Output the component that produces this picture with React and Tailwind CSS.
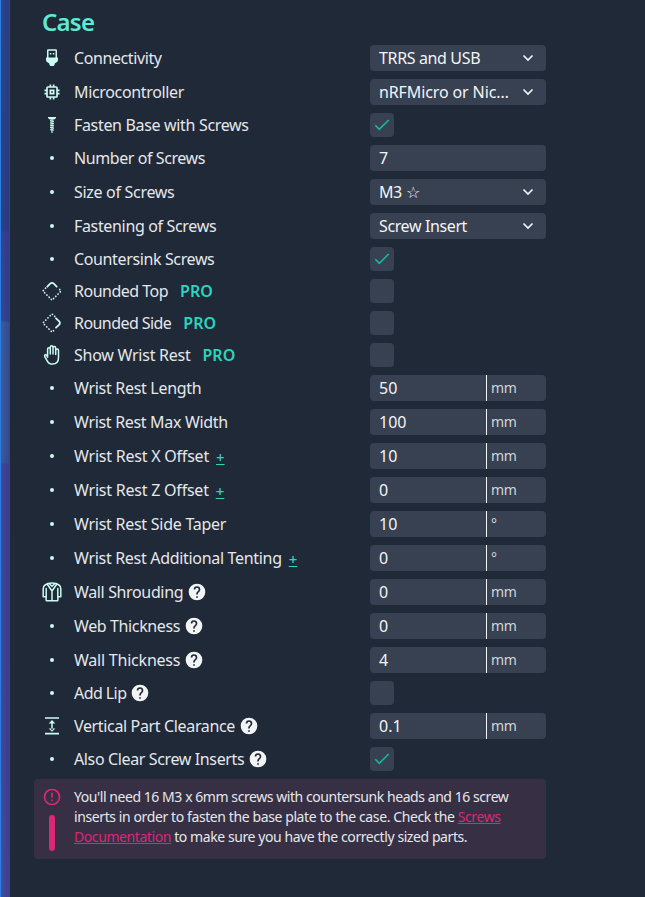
import React from "react";
import { MdMemory } from "react-icons/md";

function UsbIcon() {
  return (
    <svg width="20" height="20" viewBox="0 0 20 20" fill="currentColor">
      <path
        fillRule="evenodd"
        d="M6.200 1.300h7.600q1.200 0 1.200 1.200v7h1v2.600q0 1.500-1.300 2.200l-1.700.9-.6 1.900q-.3.9-1.200.9H8.800q-.9 0-1.200-.9L7 15.200l-1.700-.9Q4 13.600 4 12.100V9.500h1v-7q0-1.200 1.200-1.200zM6.500 2.800v6.700h7V2.800zM7.800 5h1.500v1.500H7.800zM10.800 5h1.500v1.500h-1.500z"
      />
    </svg>
  );
}

function ScrewIcon() {
  return (
    <svg width="20" height="20" viewBox="0 0 20 20" fill="currentColor">
      <path d="M6 2h8v1.100l-1.700 1.300H7.700L6 3.100zM8 5l4 .8v1.200L8 6.200zM8 7.200l4 .8v1.200L8 8.400zM8 9.500l4 .8v1.200l-4-.8zM8 11.800l4 .8v1.200l-4-.8zM8.300 14l3.400.6v1.200l-3.400-.6zM9 16.200l2 .4-.6 1.400H9.600z" />
      <path d="M8.700 4h2.600v12H8.700z" opacity=".5" />
    </svg>
  );
}

function DiamondIcon({ side }) {
  return (
    <svg width="20" height="20" viewBox="0 0 20 20" fill="none" stroke="currentColor" strokeWidth="1.500" strokeLinecap="round">
      {side ? (
        <>
          <path d="M12.800 3.500 10 .9.900 10 10 19.100l2.800-2.600" strokeWidth="1.700" strokeDasharray="0.100 3.050" />
          <path d="M14 5.300 17 8.200q1.800 1.800 0 3.600L14 14.700" strokeWidth="1.800" />
        </>
      ) : (
        <>
          <path d="M3.500 7.200.9 10 10 19.100 19.100 10l-2.600-2.800" strokeWidth="1.700" strokeDasharray="0.100 3.050" />
          <path d="M5.300 5.700 8.200 2.700q1.800-1.800 3.600 0L14.700 5.700" strokeWidth="1.800" />
        </>
      )}
    </svg>
  );
}

function HandIcon() {
  return (
    <svg width="20" height="20" viewBox="0 0 20 20" fill="none" stroke="currentColor" strokeWidth="1.500" strokeLinecap="round" strokeLinejoin="round">
      <path d="M5.600 12.200V4.100a1.350 1.350 0 0 1 2.700 0V9V2.200a1.350 1.350 0 0 1 2.700 0V9V2.900a1.350 1.350 0 0 1 2.700 0V9.500V5.400a1.400 1.400 0 0 1 2.800 0v7.200q0 6.500-6 6.500-3.700 0-5.300-3.300L2.700 11.500q-.5-1.500.6-1.900 1.100-.3 2.300 2.600" />
    </svg>
  );
}

function JacketIcon() {
  return (
    <svg width="20" height="20" viewBox="0 0 20 20" fill="none" stroke="currentColor" strokeWidth="1.500" strokeLinejoin="round" strokeLinecap="round">
      <path d="M6 1.500 3.100 3Q1.200 4.200 1.200 7v7.800h2.900V18q0 .8.800.8h10.200q.8 0 .8-.8v-3.200h2.900V7q0-2.800-1.900-4L14 1.500q-4-1-8 0z" />
      <path d="M4.200 14.800V6.500M15.800 14.800V6.500M5.300 2.200 10 9l4.700-6.800M10 9v9.600M7.300 1.700 10 4.200l2.700-2.500" />
    </svg>
  );
}

function ClearanceIcon() {
  return (
    <svg width="20" height="20" viewBox="0 0 20 20" fill="currentColor">
      <path d="M3 1.200h14v1.600H3zM3 16.800h14v1.600H3zM9.250 6h1.500v8h-1.500zM10 4l3.300 3.400H6.700zM10 15.800l3.300-3.400H6.700z" />
    </svg>
  );
}

function Help() {
  return (
    <svg width="20" height="20" viewBox="0 0 24 24" className="ml-1 text-[#f3f4f6]" fill="currentColor">
      <path d="M15.070 11.250l-.9.920C13.450 12.890 13 13.500 13 15h-2v-.5c0-1.110.450-2.110 1.170-2.830l1.240-1.260c.370-.360.590-.860.590-1.410a2 2 0 0 0-4 0H8a4 4 0 0 1 8 0 3.200 3.200 0 0 1-.930 2.250M13 19h-2v-2h2M12 2a10 10 0 1 0 0 20 10 10 0 0 0 0-20z" />
    </svg>
  );
}

const icons = {
  usb: <UsbIcon />,
  chip: <MdMemory size={20} />,
  screw: <ScrewIcon />,
  top: <DiamondIcon />,
  side: <DiamondIcon side />,
  hand: <HandIcon />,
  jacket: <JacketIcon />,
  clearance: <ClearanceIcon />,
};

function Control({ row }) {
  if (row.check !== undefined) {
    return (
      <div className="flex h-6 w-6 items-center justify-center rounded bg-[#374151]">
        {row.check && (
          <svg width="16" height="12" viewBox="0 0 16 12" fill="none" stroke="#14b8a6" strokeWidth="1.600">
            <path d="M1.300 6.300 5.300 10.300 14.700 1" />
          </svg>
        )}
      </div>
    );
  }
  if (row.select) {
    return (
      <div className="flex h-[26px] w-44 items-center justify-between rounded bg-[#374151] pl-[9px] pr-3 text-[#f3f4f6]">
        <span className={row.selectTrack}>{row.select}</span>
        <svg width="12" height="8" viewBox="0 0 12 8" fill="none" stroke="currentColor" strokeWidth="1.700">
          <path d="M1.500 1.500 6 6l4.500-4.500" />
        </svg>
      </div>
    );
  }
  return (
    <div className="flex h-[26px] w-44 items-center rounded bg-[#374151] text-[#f3f4f6]">
      <span className="flex-1 pl-[9px]">{row.value}</span>
      {row.unit && (
        <span className="flex h-full w-[60px] items-center border-l border-[#f3f4f6] pl-1 text-sm tracking-[-0.4px] text-[#d1d5db]">{row.unit}</span>
      )}
    </div>
  );
}

const rows = [
  { icon: "usb", label: "Connectivity", track: "tracking-[-0.4px]", select: "TRRS and USB", selectTrack: "tracking-[-0.36px]" },
  { icon: "chip", label: "Microcontroller", track: "tracking-[-0.34px]", select: "nRFMicro or Nic…", selectTrack: "tracking-[-0.12px]" },
  { icon: "screw", label: "Fasten Base with Screws", track: "tracking-[-0.33px]", check: true },
  { label: "Number of Screws", track: "tracking-[-0.42px]", value: "7" },
  { label: "Size of Screws", track: "tracking-[-0.3px]", select: "M3 ☆", selectTrack: "tracking-[-0.4px]" },
  { label: "Fastening of Screws", track: "tracking-[-0.34px]", select: "Screw Insert", selectTrack: "tracking-[-0.38px]" },
  { label: "Countersink Screws", track: "tracking-[-0.37px]", check: true },
  { icon: "top", label: "Rounded Top", track: "tracking-[-0.5px]", pro: true, check: false },
  { icon: "side", label: "Rounded Side", track: "tracking-[-0.56px]", pro: true, check: false },
  { icon: "hand", label: "Show Wrist Rest", track: "tracking-[-0.25px]", pro: true, check: false },
  { label: "Wrist Rest Length", track: "tracking-[-0.3px]", value: "50", unit: "mm" },
  { label: "Wrist Rest Max Width", track: "tracking-[-0.32px]", value: "100", unit: "mm" },
  { label: "Wrist Rest X Offset", track: "tracking-[-0.22px]", pm: true, value: "10", unit: "mm" },
  { label: "Wrist Rest Z Offset", track: "tracking-[-0.22px]", pm: true, value: "0", unit: "mm" },
  { label: "Wrist Rest Side Taper", track: "tracking-[-0.26px]", value: "10", unit: "°" },
  { label: "Wrist Rest Additional Tenting", track: "tracking-[-0.31px]", pm: true, value: "0", unit: "°" },
  { icon: "jacket", label: "Wall Shrouding", track: "tracking-[-0.36px]", help: true, value: "0", unit: "mm" },
  { label: "Web Thickness", track: "tracking-[-0.38px]", help: true, value: "0", unit: "mm" },
  { label: "Wall Thickness", track: "tracking-[-0.22px]", help: true, value: "4", unit: "mm" },
  { label: "Add Lip", track: "tracking-[-0.57px]", help: true, check: false },
  { icon: "clearance", label: "Vertical Part Clearance", track: "tracking-[-0.35px]", help: true, value: "0.1", unit: "mm" },
  { label: "Also Clear Screw Inserts", track: "tracking-[-0.37px]", help: true, check: true },
];

export default function App() {
  return (
    <div className="flex h-[897px] w-[645px] overflow-hidden bg-[#1f2937] font-['Noto_Sans',sans-serif] text-base text-[#e5e7eb]">
      <div className="w-px bg-[#2b7fe0]" />
      <div className="w-2 bg-[linear-gradient(to_right,transparent,rgba(31,41,90,0.3)),linear-gradient(187deg,#2c4590_0px,#2b3f8c_229px,#37429a_232px,#33459a_318px,#3c5ba2_321px,#3e58a2_459px,#43459c_462px,#42479e_750px,#474aa6_897px)]" />
      <div className="w-px bg-[#414b52]" />
      <div className="pl-6 pt-1.5">
        <h2 className="mb-[7px] ml-2 text-2xl font-semibold leading-8 tracking-[-0.75px] text-[#5eead4]">Case</h2>
        <div className="flex flex-col gap-2">
          {rows.map((row) => (
            <div key={row.label} className="flex items-center">
              <div className="ml-2 flex w-5 justify-center text-[#ccfbf1]">
                {row.icon ? icons[row.icon] : <span className="h-[4.5px] w-[4.5px] rounded-full bg-[#ccfbf1]" />}
              </div>
              <div className="ml-3 flex h-6 w-[296px] items-center whitespace-nowrap">
                <span className={row.track}>{row.label}</span>
                {row.pro && <span className="ml-3 font-semibold text-[#2dd4bf]">PRO</span>}
                {row.pm && <span className="ml-[7px] mt-[3px] text-[15px] font-medium text-[#2dd4bf] underline">+</span>}
                {row.help && <Help />}
              </div>
              <Control row={row} />
            </div>
          ))}
          <div className="flex h-20 w-[512px] rounded bg-[#373044] pl-2 pt-2">
            <div className="flex w-5 flex-col items-center">
              <svg width="20" height="20" viewBox="0 0 24 24" fill="#db2777">
                <path d="M11 15h2v2h-2zm0-8h2v6h-2zm1-5a10 10 0 1 0 0 20 10 10 0 0 0 0-20m0 18a8 8 0 1 1 0-16 8 8 0 0 1 0 16" />
              </svg>
              <div className="mt-2 h-9 w-1.5 rounded-full bg-[#db2777]" />
            </div>
            <p className="ml-3 whitespace-nowrap text-sm tracking-[-0.42px] text-[#e5e7eb]">
              <span className="tracking-[-0.44px]">You'll need 16 M3 x 6mm screws with countersunk heads and 16 screw</span>
              <br />
              <span className="tracking-[-0.4px]">
                inserts in order to fasten the base plate to the case. Check the{" "}
                <a className="text-[#db2777] underline">Screws</a>
              </span>
              <br />
              <a className="text-[#db2777] underline">Documentation</a> to make sure you have the correctly sized parts.
            </p>
          </div>
        </div>
      </div>
    </div>
  );
}
